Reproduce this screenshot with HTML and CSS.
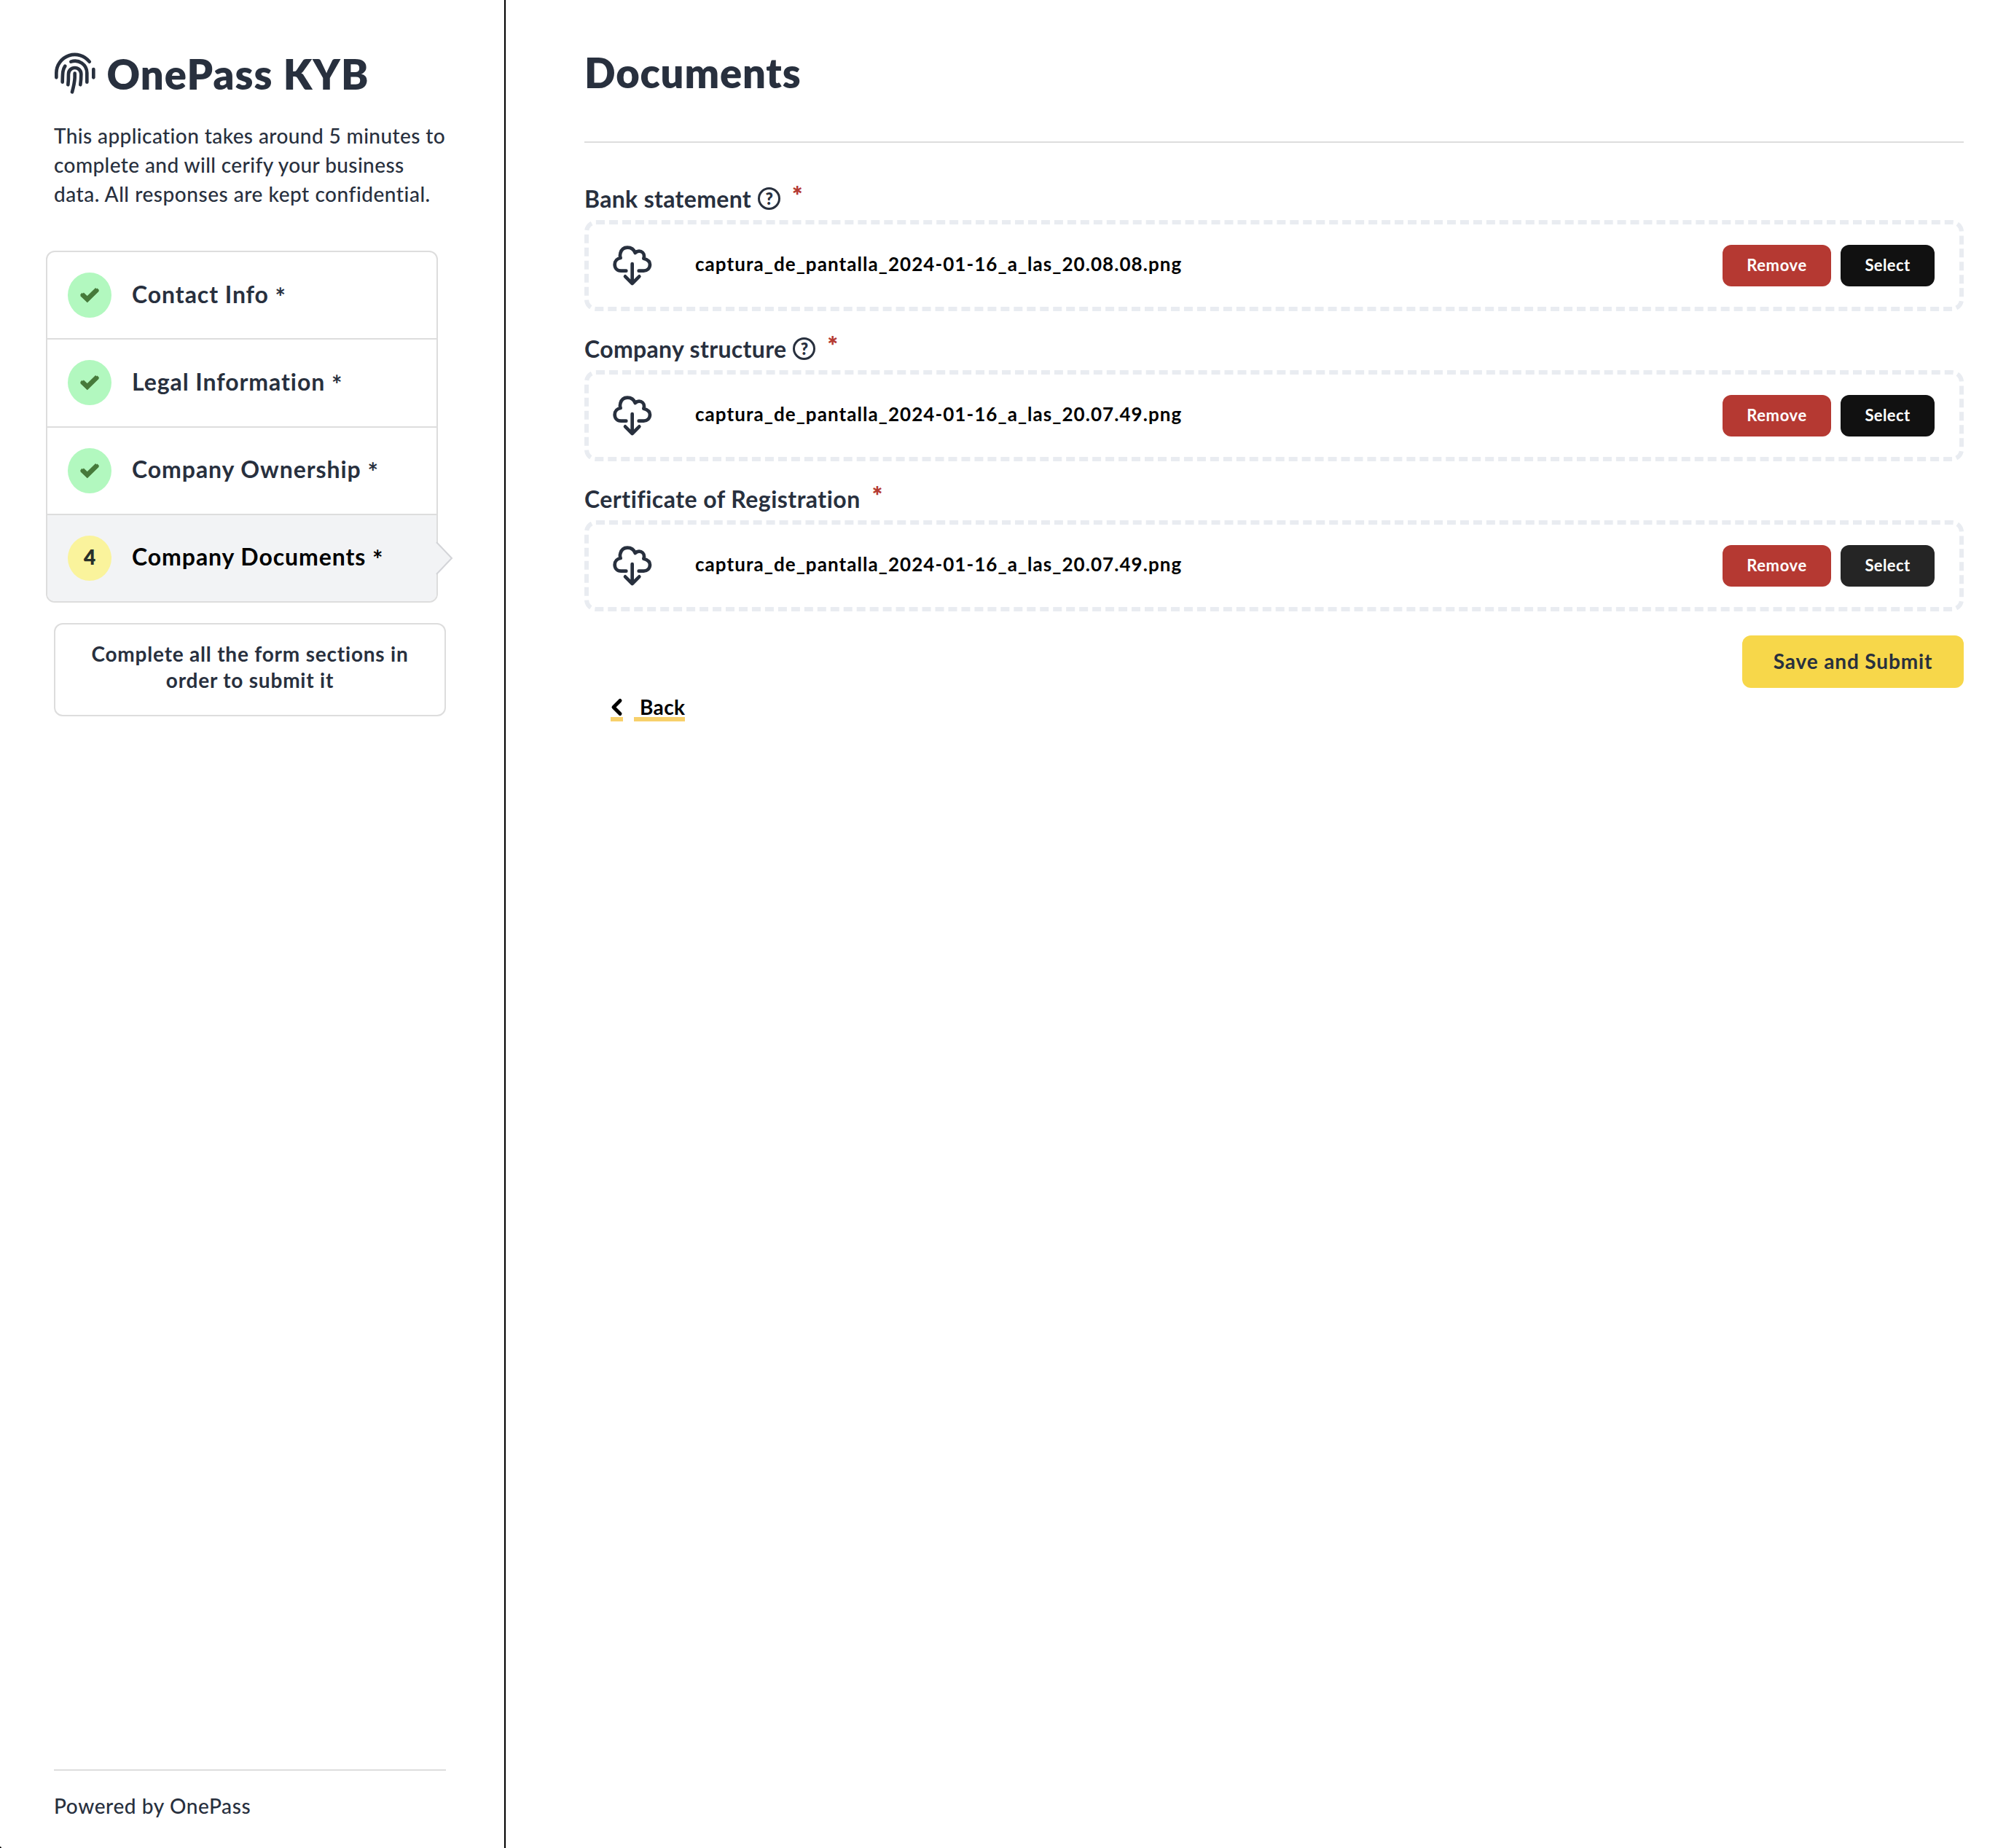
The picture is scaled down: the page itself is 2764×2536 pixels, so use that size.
FILE: index.html
```html
<!DOCTYPE html>
<html lang="en">
<head>
<meta charset="utf-8">
<title>OnePass KYB</title>
<link rel="stylesheet" href="styles.css">
</head>
<body>
<svg class="symbols" aria-hidden="true">
  <symbol id="check" viewBox="0 0 26 26"><path fill="none" stroke="currentColor" stroke-width="6.6" stroke-linejoin="miter" stroke-linecap="butt" d="M2.6 11.8L9.8 18.6L23.4 5.4"/><path fill="none" stroke="currentColor" stroke-width="3" stroke-linejoin="round" d="M3.6 10.9L1.8 12.7L9.8 20.8L24.2 6.4L22.4 4.6"/></symbol>
  <symbol id="cloud" viewBox="0 0 180 180"><g fill="none" stroke="currentColor" stroke-width="14" stroke-linecap="round" stroke-linejoin="round"><path d="M64 110H43C27 110 17 99 17 84C17 69 28 59 41 57C38 49 38 44 40 38C44 23 55 14 69 14C84 14 96 22 101 36C106 31 112 29 117 29C129 29 138 38 138 50C138 54 136 57 136 59C151 63 162 71 162 84C162 100 150 110 136 110H116"/><path d="M89 81V160M60 133L89 162L118 133"/></g></symbol>
</svg>
<div class="app">
  <aside class="sidebar">
    <h1 class="brand">
      <svg class="brand-icon" viewBox="24 24 180 172"><g fill="none" stroke="currentColor" stroke-width="14" stroke-linecap="round"><path d="M37 127V108A76 76 0 0 1 173 62"/><path d="M97 62A49 49 0 0 1 163 108V146"/><path d="M73 80C62 96 63 110 62 146"/><path d="M85 157C87 140 87 130 87 113A26 26 0 0 1 139 113C139 130 138 142 136 157"/><path d="M113 110V128C112 150 108 165 102 187"/><path d="M190 93V127"/></g></svg>
      <span>OnePass KYB</span>
    </h1>
    <p class="intro">This application takes around 5 minutes to<br>complete and will cerify your business<br><span class="loose">data. All responses are kept confidential.</span></p>
    <nav class="steps">
      <a class="step"><span class="badge done"><svg><use href="#check"/></svg></span><span class="step-name">Contact Info <sub>*</sub></span></a>
      <a class="step"><span class="badge done"><svg><use href="#check"/></svg></span><span class="step-name">Legal Information <sub>*</sub></span></a>
      <a class="step"><span class="badge done"><svg><use href="#check"/></svg></span><span class="step-name">Company Ownership <sub>*</sub></span></a>
      <a class="step current"><span class="badge">4</span><span class="step-name">Company Documents <sub>*</sub></span>
        <svg class="pointer" viewBox="0 0 24 46"><path class="pointer-fill" d="M0 1L22 23L0 45Z"/><path class="pointer-line" d="M1 1L22 23L1 45"/></svg></a>
    </nav>
    <div class="notice">Complete all the form sections in<br>order to submit it</div>
    <footer class="footer">Powered by OnePass</footer>
    <i class="corner"></i>
  </aside>
  <main class="main">
    <h2 class="title">Documents</h2>
    <section class="field">
      <div class="label"><span>Bank statement</span><span class="help">?</span><span class="required">*</span></div>
      <div class="file"><svg class="cloud"><use href="#cloud"/></svg><span class="file-name">captura_de_pantalla_2024-01-16_a_las_20.08.08.png</span><button class="btn remove">Remove</button><button class="btn select">Select</button></div>
    </section>
    <section class="field">
      <div class="label"><span>Company structure</span><span class="help">?</span><span class="required">*</span></div>
      <div class="file"><svg class="cloud"><use href="#cloud"/></svg><span class="file-name">captura_de_pantalla_2024-01-16_a_las_20.07.49.png</span><button class="btn remove">Remove</button><button class="btn select">Select</button></div>
    </section>
    <section class="field">
      <div class="label wide"><span>Certificate of Registration</span><span class="required">*</span></div>
      <div class="file"><svg class="cloud"><use href="#cloud"/></svg><span class="file-name">captura_de_pantalla_2024-01-16_a_las_20.07.49.png</span><button class="btn remove">Remove</button><button class="btn select hover">Select</button></div>
    </section>
    <button class="submit">Save and Submit</button>
    <a class="back"><span class="back-arrow"><svg viewBox="0 0 17 28"><path d="M13 5.5L4 14.5L13 23.5"/></svg></span><span class="back-text">Back</span></a>
  </main>
</div>
</body>
</html>
```
FILE: styles.css
```css
* { box-sizing: border-box; }
body { margin: 0; background: #fff; color: #28303e; font-family: Lato, "Open Sans", sans-serif; }
h1, h2, p { margin: 0; }
button { border: 0; font-family: inherit; }
.symbols { position: absolute; width: 0; height: 0; }

.app { display: flex; height: 2536px; }

.sidebar {
  position: relative;
  display: flex;
  flex-direction: column;
  flex: none;
  width: 694px;
  padding: 68px 80px 38px 74px;
  border-right: 2px solid #000;
}
.brand { display: flex; font-size: 56px; font-weight: 800; line-height: 68px; letter-spacing: 1.112px; }
.brand-icon { width: 60px; height: 57.3px; margin: 4px 13.5px 0 -1px; }
.intro { margin-top: 30px; font-size: 28px; line-height: 40px; letter-spacing: .4px; font-weight: 500; white-space: nowrap; }
.loose { letter-spacing: .53px; }

.steps {
  width: 538px;
  margin: 58px 0 0 -11px;
  border: 2px solid #ddd;
  border-radius: 12px;
}
.step { position: relative; display: flex; align-items: center; height: 120.3px; padding-left: 28px; border-bottom: 2px solid #ddd; }
.step:last-child { height: 118px; border-bottom: 0; }
.step-name { margin-left: 28px; padding-bottom: 4px; font-size: 32px; font-weight: 700; letter-spacing: .93px; white-space: nowrap; }
.step-name sub { font-size: 34px; line-height: 0; vertical-align: -4px; }
.current { background: #f2f3f5; border-radius: 0 0 10px 10px; color: #000; }
.badge {
  display: flex;
  align-items: center;
  justify-content: center;
  width: 60px;
  height: 62px;
  border-radius: 50%;
  background: #faf39c;
  color: #28302a;
  font-size: 28px;
  font-weight: 800;
  padding-bottom: 3px;
}
.badge svg { width: 26px; height: 26px; margin-top: 3px; }
.done { background: #b2f8bf; color: #477a3b; }
.pointer { position: absolute; right: -23px; top: 36px; width: 24px; height: 46px; }
.pointer-fill { fill: #f2f3f5; }
.pointer-line { fill: none; stroke: #d3d4d8; stroke-width: 2; }

.notice {
  height: 128px;
  margin-top: 28px;
  padding-top: 22px;
  border: 2px solid #ddd;
  border-radius: 12px;
  font-size: 28px;
  font-weight: 700;
  line-height: 36.4px;
  letter-spacing: .79px;
  text-align: center;
}
.footer { margin-top: auto; padding: 28px 0 0; border-top: 2px solid #ddd; font-size: 28px; font-weight: 500; line-height: 40px; letter-spacing: .6px; }
.corner { position: absolute; left: 0; bottom: 0; width: 2px; height: 2px; background: #000; border-radius: 0 2px 0 0; }

.main { display: flex; flex-direction: column; flex: 1; padding: 66px 69px 0 108px; }
.title { padding-bottom: 60px; border-bottom: 2px solid #ddd; margin-bottom: 57px; font-size: 56px; font-weight: 800; line-height: 68px; letter-spacing: .85px; }
.field { margin-bottom: 32px; }
.label { display: flex; height: 40px; margin-bottom: 9px; font-size: 32px; font-weight: 700; line-height: 40px; letter-spacing: .33px; }
.wide { letter-spacing: .47px; }
.help {
  width: 31px;
  height: 31px;
  margin: 4px 0 0 9px;
  border: 3px solid #28303e;
  border-radius: 50%;
  font-size: 22px;
  font-weight: 800;
  line-height: 25px;
  letter-spacing: 0;
  text-align: center;
}
.required { margin: -5px 0 0 16px; color: #b53a32; font-size: 34px; font-weight: 800; }
.file { display: flex; align-items: center; height: 125px; padding: 0 34px 0 30px; border: 6px dashed #e9ecf1; border-radius: 16px; }
.cloud { width: 60px; height: 60px; }
.file-name { flex: 1; margin-left: 56px; padding-bottom: 5px; color: #000; font-size: 26px; font-weight: 700; letter-spacing: 1.053px; }
.btn { height: 57px; padding: 0 0 3px; border-radius: 12px; color: #fff; font-size: 22px; font-weight: 700; letter-spacing: .6px; }
.remove { width: 149px; margin-right: 13px; background: #b53932; }
.select { width: 129px; background: #111; letter-spacing: .4px; }
.hover { background: #252525; }
.submit {
  align-self: flex-end;
  width: 304px;
  height: 72px;
  margin-top: 1px;
  padding: 0 0 3px;
  border-radius: 12px;
  background: #f7d74a;
  color: #28303e;
  font-size: 28px;
  font-weight: 700;
  letter-spacing: .86px;
}
.back { display: flex; gap: 15px; margin: 12px 0 0 36px; color: #000; font-size: 28px; font-weight: 700; line-height: 29px; letter-spacing: .36px; }
.back-arrow, .back-text { height: 34px; border-bottom: 6px solid #f7d06b; }
.back-arrow { width: 17px; }
.back-arrow svg { display: block; width: 17px; height: 28px; fill: none; stroke: #000; stroke-width: 5; stroke-linecap: round; stroke-linejoin: round; }
.back-text { padding-left: 8px; }
```
